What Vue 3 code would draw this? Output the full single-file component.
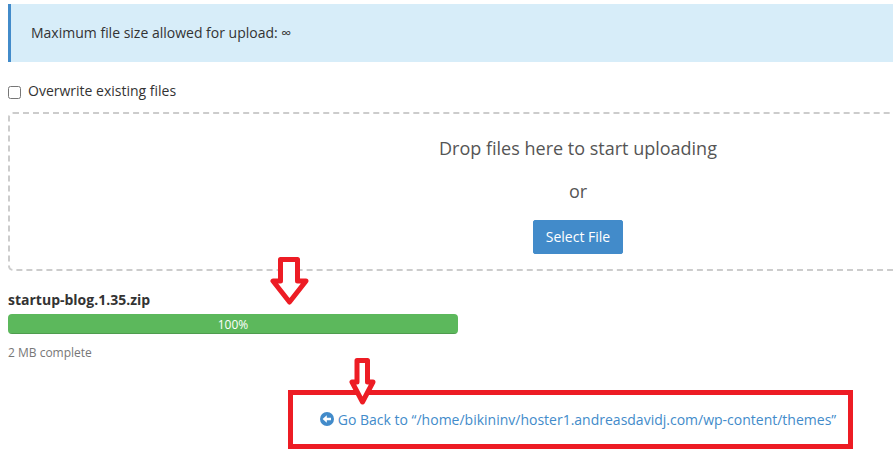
<template>
  <div class="upload-page">
    <main class="upload-content">
      <div class="callout">
        Maximum file size allowed for upload: {{ maxSize }}
      </div>

      <div class="overwrite">
        <input id="overwrite" v-model="overwrite" type="checkbox" />
        <label for="overwrite">Overwrite existing files</label>
      </div>

      <section class="drop-zone">
        <p>Drop files here to start uploading</p>
        <p>or</p>
        <button type="button" class="btn-select" @click="fileInput.click()">Select File</button>
        <input ref="fileInput" type="file" aria-label="File to upload" hidden />
      </section>

      <section v-for="file in files" :key="file.name" class="upload-item">
        <div class="file-name">{{ file.name }}</div>
        <div class="progress">
          <div class="progress-bar" :style="{ width: file.percent + '%' }">{{ file.percent }}%</div>
        </div>
        <div class="file-status">{{ file.status }}</div>
        <svg class="arrow arrow-progress" width="40" height="50" viewBox="0 0 40 50" aria-hidden="true">
          <path d="M10.5 2.5H27.5V24H36L19.5 45L3 24H10.5Z" />
        </svg>
      </section>

      <nav class="go-back">
        <div class="highlight">
          <a href="#">
            <svg class="icon" width="14" height="14" viewBox="0 0 14 14" aria-hidden="true">
              <circle cx="7" cy="7" r="7" fill="#428bca" />
              <path d="M2.6 7L6.8 3.2V5.8H11V8.2H6.8V10.8Z" fill="#fff" />
            </svg>
            <span>Go Back to “{{ directory }}”</span>
          </a>
          <svg class="arrow arrow-back" width="28" height="50" viewBox="0 0 28 50" aria-hidden="true">
            <path d="M8 2.5H18.5V24H24L13.5 44L3 24H8Z" />
          </svg>
        </div>
      </nav>
    </main>
  </div>
</template>

<script setup>
import { ref } from 'vue'

const maxSize = '∞'
const directory = '/home/bikininv/hoster1.andreasdavidj.com/wp-content/themes'

const overwrite = ref(false)
const fileInput = ref(null)
const files = ref([
  { name: 'startup-blog.1.35.zip', percent: 100, status: '2 MB complete' }
])
</script>

<style>
body {
  background: #fff;
}
</style>

<style scoped>
.upload-page {
  overflow: hidden;
  padding: 4px 0 10px 8px;
  font-family: 'Open Sans', sans-serif;
  font-size: 14px;
  line-height: 20px;
  color: #333;
}

/* The content column runs past the right edge of the window */
.upload-content {
  margin-right: -255px;
}

.callout {
  padding: 19px 20px;
  border-left: 3px solid #428bca;
  background: #d7edf9;
}

.overwrite {
  display: flex;
  align-items: center;
  gap: 7px;
  margin: 19px 0 11px;
}

.overwrite input {
  width: 13px;
  height: 13px;
  margin: 2px 0 0;
}

.drop-zone {
  display: flex;
  flex-direction: column;
  align-items: center;
  padding: 21px 0 15px;
  border: 2px dashed #ccc;
  border-radius: 5px;
  font-size: 18px;
  line-height: 27px;
  color: #555;
}

.drop-zone p {
  margin: 0 0 16px;
}

.drop-zone p + p {
  margin-bottom: 15px;
}

.btn-select {
  padding: 6px 12px;
  border: 1px solid #428bca;
  border-radius: 2px;
  background: #428bca;
  color: #fff;
  font-family: inherit;
  font-size: 14px;
  line-height: 20px;
  cursor: pointer;
}

.btn-select:hover {
  background: #3071a9;
}

.upload-item {
  position: relative;
  width: 450px;
  padding-top: 19px;
}

.file-name {
  font-weight: 700;
}

.progress {
  height: 20px;
  margin: 4px 0 8px;
  border-radius: 4px;
  overflow: hidden;
  background: #f5f5f5;
}

.progress-bar {
  height: 100%;
  background: #5cb85c;
  box-shadow: inset 0 -1px 0 rgba(0, 0, 0, 0.15);
  color: #fff;
  font-size: 12px;
  line-height: 22px;
  text-align: center;
}

.file-status {
  font-size: 12px;
  line-height: 22px;
  color: #777;
}

.go-back {
  display: flex;
  justify-content: center;
  margin-top: 26px;
}

.highlight {
  position: relative;
  margin-right: 15px;
  padding: 15px 12px 14px 27px;
  border: 5px solid #ed1c24;
}

.highlight a {
  display: flex;
  align-items: center;
  gap: 4px;
  color: #428bca;
  text-decoration: none;
}

.highlight a:hover {
  text-decoration: underline;
}

.icon {
  margin-bottom: 2px;
}

.arrow {
  position: absolute;
  fill: #fff;
  stroke: #ed1c24;
  stroke-width: 5px;
  stroke-linejoin: round;
}

.arrow-progress {
  top: -14px;
  left: 262px;
}

.arrow-back {
  top: -37px;
  left: 56px;
}
</style>
